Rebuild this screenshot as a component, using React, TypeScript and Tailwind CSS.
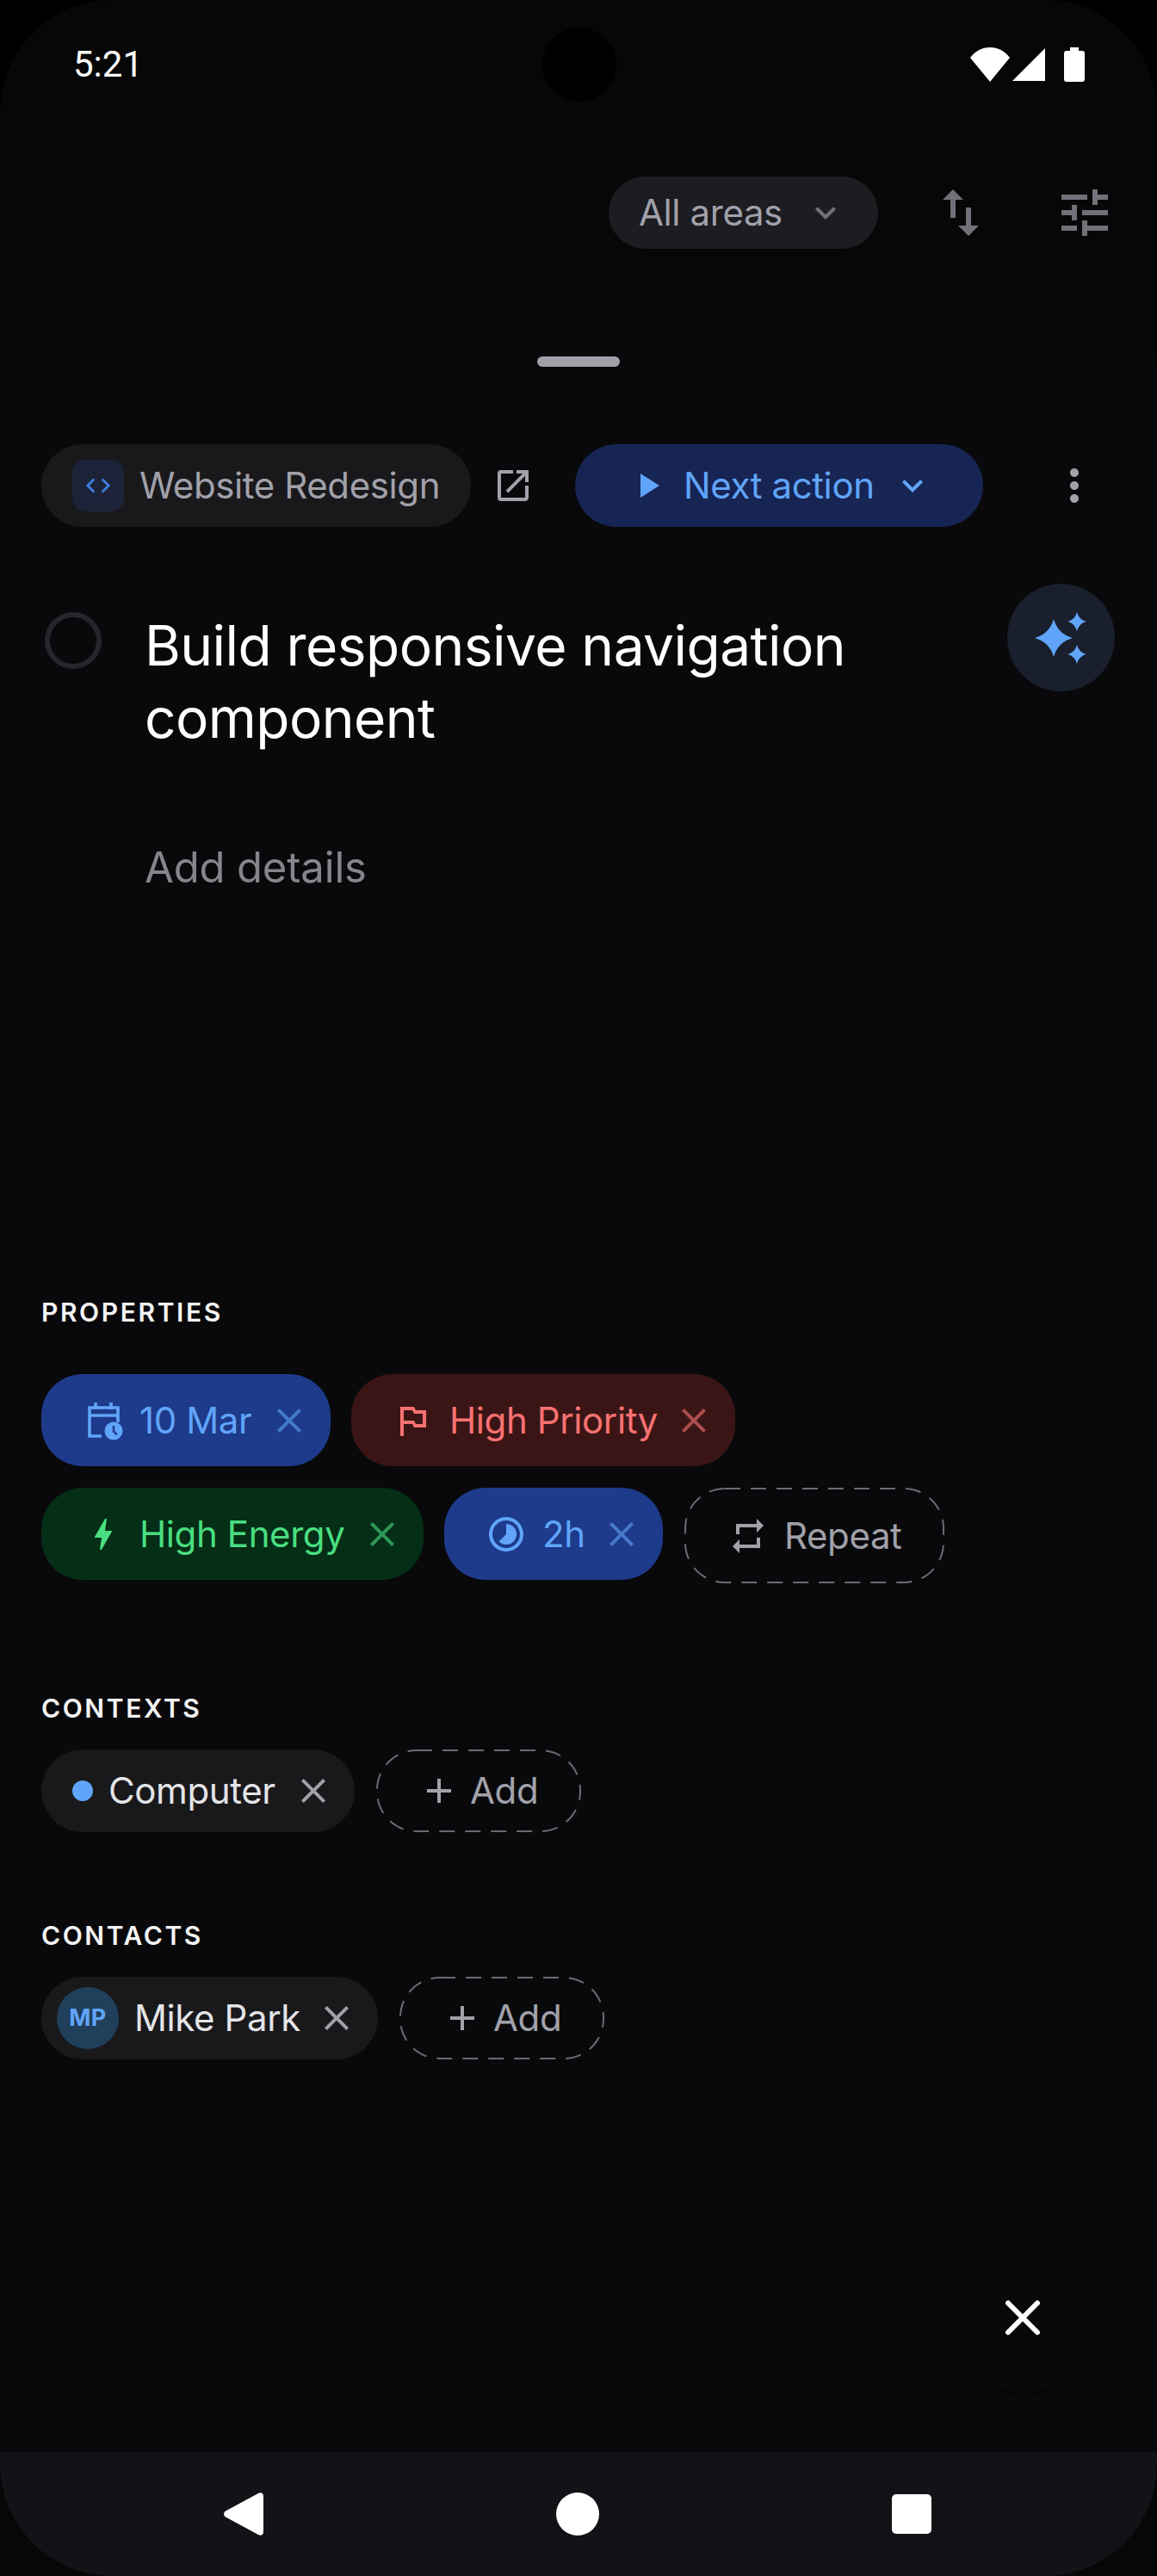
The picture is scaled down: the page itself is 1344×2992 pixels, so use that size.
import type { ReactNode } from 'react'
import {
  MdAdd,
  MdBolt,
  MdClose,
  MdCode,
  MdKeyboardArrowDown,
  MdMoreVert,
  MdOpenInNew,
  MdOutlinedFlag,
  MdPlayArrow,
  MdRepeat,
  MdSwapVert,
  MdTimelapse,
  MdTune,
} from 'react-icons/md'

function DashedBorder({ w, h }: { w: number; h: number }) {
  return (
    <svg className="absolute left-0 top-0" width={w} height={h} fill="none">
      <rect x="1" y="1" width={w - 2} height={h - 2} rx={46} stroke="#6b6b73" strokeWidth="2" strokeDasharray="18 12" />
    </svg>
  )
}

function Sparkles() {
  const star = (cx: number, cy: number, rx: number, ry: number) =>
    `M${cx} ${cy - ry}Q${cx + rx * 0.22} ${cy - ry * 0.22} ${cx + rx} ${cy}Q${cx + rx * 0.22} ${cy + ry * 0.22} ${cx} ${cy + ry}Q${cx - rx * 0.22} ${cy + ry * 0.22} ${cx - rx} ${cy}Q${cx - rx * 0.22} ${cy - ry * 0.22} ${cx} ${cy - ry}Z`
  return (
    <svg width="64" height="64" viewBox="0 0 64 64" fill="#60a5fa">
      <path d={star(23, 32, 22, 22)} />
      <path d={star(50, 13, 10.5, 11)} />
      <path d={star(50, 51, 10.5, 11)} />
    </svg>
  )
}

function CalendarClock() {
  return (
    <svg width="48" height="48" viewBox="0 0 48 48" fill="none" className="shrink-0">
      <path d="M20 42H6V9h33v17" stroke="#60a5fa" strokeWidth="3.6" />
      <path d="M6 18h33M13 3v8M31 3v8" stroke="#60a5fa" strokeWidth="3.6" />
      <circle cx="34" cy="36" r="10.5" fill="#60a5fa" />
      <path d="M34 30v6.5l4 4" stroke="#1e3a8a" strokeWidth="2.4" />
    </svg>
  )
}

function Label({ children }: { children: ReactNode }) {
  return <h3 className="text-[30px] leading-[40px] font-semibold tracking-[2.6px] text-[#f4f4f5]">{children}</h3>
}

function PropChip({ className, icon, text, gap }: { className: string; icon: ReactNode; text: string; gap: string }) {
  return (
    <div className={`flex h-[107px] items-center rounded-[48px] pr-[24px] ${className}`}>
      {icon}
      <span className={`text-[42px] leading-[56px] ${gap}`}>{text}</span>
      <MdClose className="ml-auto opacity-60" size={48} />
    </div>
  )
}

function AddChip() {
  return (
    <div className="relative flex h-[96px] w-[238px] items-center pl-[49px] text-[#a1a1aa]">
      <DashedBorder w={238} h={96} />
      <MdAdd size={48} />
      <span className="ml-[12px] text-[42px] leading-[56px]">Add</span>
    </div>
  )
}

export default function App() {
  return (
    <div className="flex h-[2992px] w-[1344px] flex-col overflow-hidden bg-black font-['Inter',sans-serif] tracking-[-0.4px]">
      <div className="relative flex flex-1 flex-col rounded-t-[130px] bg-[#070708]">
        {/* camera */}
        <div className="absolute left-[630px] top-[32px] h-[86px] w-[86px] rounded-full bg-black" />

        {/* status bar */}
        <div className="flex h-[150px] items-center justify-between pl-[85px] pr-[84px]">
          <span className="font-['Roboto',sans-serif] text-[42px] leading-[50px] tracking-normal text-white">5:21</span>
          <div className="flex items-center">
            <svg width="46" height="40" viewBox="0 0 46 40" fill="white">
              <path d="M0 12C6 4 14 0 23 0s17 4 23 12L23 40Z" />
            </svg>
            <svg className="ml-[3px]" width="39" height="38" viewBox="0 0 39 38" fill="white">
              <path d="M38 0v38H0Z" />
            </svg>
            <svg className="ml-[21px]" width="24" height="40" viewBox="0 0 24 40" fill="white">
              <path d="M7 0h10v4h4a3 3 0 0 1 3 3v30a3 3 0 0 1-3 3H3a3 3 0 0 1-3-3V7a3 3 0 0 1 3-3h4Z" />
            </svg>
          </div>
        </div>

        {/* filters */}
        <div className="mt-[55px] flex items-center justify-end pr-[48px]">
          <div className="flex h-[84px] w-[313px] items-center rounded-full bg-[#1c1c21] pl-[35px] text-[#a1a1aa]">
            <span className="text-[42px] leading-[56px]">All areas</span>
            <MdKeyboardArrowDown className="ml-[26px] text-[#71717a]" size={48} />
          </div>
          <MdSwapVert className="ml-[60px] text-[#71717a]" size={72} />
          <MdTune className="ml-[72px] text-[#71717a]" size={72} />
        </div>

        {/* sheet */}
        <div className="relative mt-[59px] flex flex-1 flex-col rounded-t-[84px] bg-[#09090b] pt-[66px]">
          <div className="mx-auto h-[12px] w-[96px] rounded-full bg-[#a1a1aa]" />

          <div className="mt-[90px] flex items-center pl-[48px]">
            <div className="flex h-[96px] w-[499px] items-center rounded-full bg-[#19191c] pl-[36px]">
              <div className="flex h-[60px] w-[60px] items-center justify-center rounded-[15px] bg-[#1c2238]">
                <MdCode className="text-[#3f7de0]" size={34} />
              </div>
              <span className="ml-[18px] text-[42px] leading-[56px] text-[#a1a1aa]">Website Redesign</span>
            </div>
            <MdOpenInNew className="ml-[25px] text-[#a1a1aa]" size={48} />
            <div className="ml-[48px] flex h-[96px] w-[474px] items-center rounded-full bg-[#172554] pl-[60px] text-[#60a5fa]">
              <MdPlayArrow size={48} />
              <span className="ml-[18px] text-[42px] leading-[56px]">Next action</span>
              <MdKeyboardArrowDown className="ml-[20px]" size={48} />
            </div>
            <MdMoreVert className="ml-[76px] text-[#a1a1aa]" size={60} />
          </div>

          <div className="mt-[66px] flex items-start pl-[52px]">
            <div className="mt-[33px] h-[66px] w-[66px] shrink-0 rounded-full border-[6px] border-[#25252d]" />
            <div className="ml-[50px] mt-[30px] w-[1002px]">
              <h1 className="w-[900px] text-[64px] leading-[84px] tracking-[-0.55px] text-white">Build responsive navigation component</h1>
              <p className="mt-[104px] text-[49px] leading-[56px] tracking-[-0.16px] text-[#85858c]">Add details</p>
            </div>
            <div className="flex h-[125px] w-[125px] shrink-0 items-center justify-center rounded-full bg-[#1a1f2e]">
              <Sparkles />
            </div>
          </div>

          <div className="mt-[468px] pl-[48px]">
            <Label>PROPERTIES</Label>
            <div className="mt-[52px] flex gap-[24px]">
              <PropChip className="w-[336px] bg-[#1e3a8a] pl-[50px] text-[#60a5fa]" gap="ml-[16px]" icon={<CalendarClock />} text="10 Mar" />
              <PropChip className="w-[446px] bg-[#3b1515] pl-[47px] text-[#f87171]" gap="ml-[19px]" icon={<MdOutlinedFlag size={48} />} text="High Priority" />
            </div>
            <div className="mt-[25px] flex items-start">
              <PropChip className="w-[444px] bg-[#052e16] pl-[48px] text-[#4ade80]" gap="ml-[18px]" icon={<MdBolt size={48} />} text="High Energy" />
              <PropChip className="ml-[24px] w-[254px] bg-[#1e3a8a] pl-[48px] text-[#60a5fa]" gap="ml-[18px]" icon={<MdTimelapse size={48} />} text="2h" />
              <div className="relative ml-[25px] flex h-[111px] w-[302px] items-center pl-[50px] text-[#a1a1aa]">
                <DashedBorder w={302} h={111} />
                <MdRepeat size={48} />
                <span className="ml-[18px] text-[42px] leading-[56px]">Repeat</span>
              </div>
            </div>
          </div>

          <div className="mt-[125px] pl-[48px]">
            <Label>CONTEXTS</Label>
            <div className="mt-[28px] flex gap-[25px]">
              <div className="flex h-[96px] w-[364px] items-center rounded-full bg-[#19191c] pl-[36px] pr-[24px]">
                <div className="h-[24px] w-[24px] rounded-full bg-[#60a5fa]" />
                <span className="ml-[18px] text-[42px] leading-[56px] text-[#e4e4e7]">Computer</span>
                <MdClose className="ml-auto text-[#a1a1aa]" size={48} />
              </div>
              <AddChip />
            </div>
          </div>

          <div className="mt-[100px] pl-[48px]">
            <Label>CONTACTS</Label>
            <div className="mt-[28px] flex gap-[25px]">
              <div className="flex h-[96px] w-[391px] items-center rounded-full bg-[#19191c] pl-[18px] pr-[24px]">
                <div className="flex h-[72px] w-[72px] items-center justify-center rounded-full bg-[#203f5a] text-[27px] font-bold tracking-[0.5px] text-[#60a5fa]">MP</div>
                <span className="ml-[18px] text-[42px] leading-[56px] text-[#e4e4e7]">Mike Park</span>
                <MdClose className="ml-auto text-[#a1a1aa]" size={48} />
              </div>
              <AddChip />
            </div>
          </div>

          {/* close fab */}
          <div className="absolute left-[1128px] top-[2312px] flex h-[120px] w-[120px] justify-center rounded-full pt-[8px] shadow-[0_3px_3px_rgba(0,0,0,0.45)]">
            <svg width="48" height="48" viewBox="0 0 48 48" fill="none" stroke="white" strokeWidth="6" strokeLinecap="round">
              <path d="M7 7l34 34M41 7L7 41" />
            </svg>
          </div>
        </div>

        {/* nav bar */}
        <div className="flex h-[144px] items-center rounded-b-[130px] bg-[#121217] pl-[260px]">
          <svg width="46" height="50" viewBox="0 0 46 50" fill="white">
            <path d="M46 4v42c0 3-3 5-6 3L3 29c-4-2-4-6 0-8L40 1c3-2 6 0 6 3Z" />
          </svg>
          <div className="ml-[340px] h-[50px] w-[50px] rounded-full bg-white" />
          <div className="ml-[340px] h-[46px] w-[46px] rounded-[5px] bg-white" />
        </div>
      </div>
    </div>
  )
}
